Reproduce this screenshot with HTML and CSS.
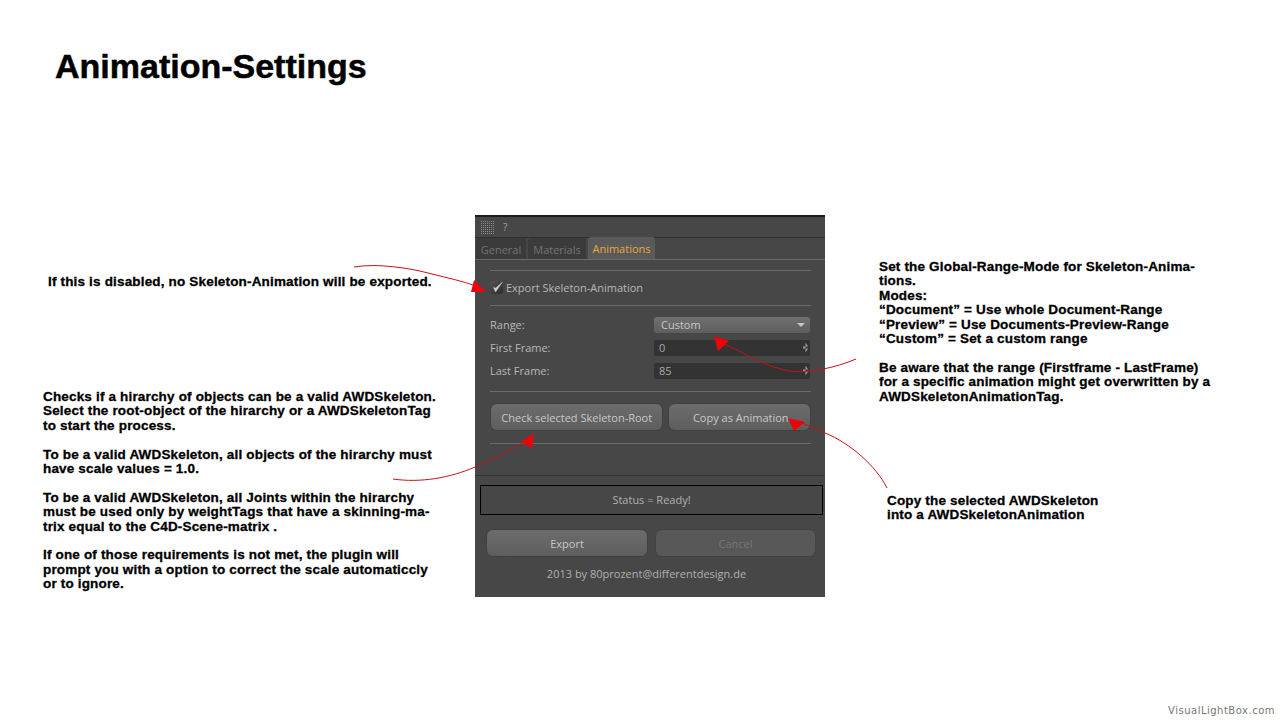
FILE: index.html
```html
<!DOCTYPE html>
<html lang="de">
<head>
    <meta charset="UTF-8" />
    <title>Animation-Settings</title>
    <link rel="stylesheet" href="styles.css">
</head>
<body>
<div class="slide">

    <h1 class="title">Animation-Settings</h1>

    <!-- Notes around the panel -->
    <div class="note note-export">
        <p>If this is disabled, no Skeleton-Animation will be exported.</p>
    </div>

    <div class="note note-check">
        <p>Checks if a hirarchy of objects can be a valid AWDSkeleton.<br>Select the root-object of the hirarchy or a AWDSkeletonTag<br>to start the process.</p>
        <p>To be a valid AWDSkeleton, all objects of the hirarchy must<br>have scale values = 1.0.</p>
        <p>To be a valid AWDSkeleton, all Joints within the hirarchy<br>must be used only by weightTags that have a skinning-ma-<br>trix equal to the C4D-Scene-matrix .</p>
        <p>If one of those requirements is not met, the plugin will<br>prompt you with a option to correct the scale automaticcly<br>or to ignore.</p>
    </div>

    <div class="note note-range">
        <p>Set the Global-Range-Mode for Skeleton-Anima-<br>tions.<br>Modes:<br>“Document” = Use whole Document-Range<br>“Preview” = Use Documents-Preview-Range<br>“Custom” = Set a custom range</p>
        <p>Be aware that the range (Firstframe - LastFrame)<br>for a specific animation might get overwritten by a<br>AWDSkeletonAnimationTag.</p>
    </div>

    <div class="note note-copy">
        <p>Copy the selected AWDSkeleton<br>into a AWDSkeletonAnimation</p>
    </div>

    <!-- Plugin dialog -->
    <div class="panel">
        <div class="panel-top">
            <svg class="grip" width="13" height="13" viewBox="0 0 13 13">
                <defs>
                    <pattern id="gripDots" width="2" height="2" patternUnits="userSpaceOnUse">
                        <rect width="1" height="1" fill="#8a8a8a"/>
                    </pattern>
                </defs>
                <rect width="13" height="13" fill="url(#gripDots)"/>
            </svg>
            <span class="help">?</span>
        </div>

        <div class="tabs">
            <span class="tab tab-general">General</span>
            <span class="tab tab-materials">Materials</span>
            <span class="tab tab-active">Animations</span>
        </div>

        <div class="panel-body">
            <div class="sep"></div>

            <div class="check-row">
                <span class="checkbox">
                    <svg width="13" height="13" viewBox="0 0 13 13">
                        <path d="M3.5 6.5 L5.5 11 L12.5 1 L5.8 7 Z" fill="#cfcfcf" stroke="#cfcfcf" stroke-width="0.4"/>
                    </svg>
                </span>
                <span>Export Skeleton-Animation</span>
            </div>

            <div class="sep"></div>

            <div class="form-row form-row-first">
                <label>Range:</label>
                <div class="select">
                    <span>Custom</span>
                    <span class="caret"></span>
                </div>
            </div>
            <div class="form-row">
                <label>First Frame:</label>
                <div class="field"><span>0</span><span class="spin"></span></div>
            </div>
            <div class="form-row">
                <label>Last Frame:</label>
                <div class="field"><span>85</span><span class="spin"></span></div>
            </div>

            <div class="sep sep-before-btns"></div>

            <div class="btn-row">
                <button class="btn btn-check">Check selected Skeleton-Root</button>
                <button class="btn btn-copy">Copy as Animation</button>
            </div>

            <div class="sep sep-after-btns"></div>
        </div>

        <div class="panel-foot">
            <div class="status">Status = Ready!</div>
            <div class="foot-btns">
                <button class="btn btn-export">Export</button>
                <button class="btn btn-cancel">Cancel</button>
            </div>
            <div class="credit">2013 by 80prozent@differentdesign.de</div>
        </div>
    </div>

    <!-- Red arrows, on top of everything -->
    <svg class="arrows" width="1280" height="720" viewBox="0 0 1280 720">
        <g fill="none" stroke="#c4121b" stroke-width="1">
            <path d="M354 267 C378 263 410 268 432 274 C448 278 462 281 476 286"/>
            <path d="M856 359 C835 368 810 373 790 371 C765 367 745 353 724 344"/>
            <path d="M393 479 C420 483 450 478 475 467 C495 458 510 450 526 441"/>
            <path d="M887 488 C876 466 850 443 825 433 C815 428 808 425 798 422"/>
        </g>
        <g fill="#f00008">
            <polygon points="486,292 474,280 471,292"/>
            <polygon points="714,336 729,341 718,351"/>
            <polygon points="534,433 521,442 532,448"/>
            <polygon points="788,418 805,422 794,431"/>
        </g>
    </svg>

    <div class="watermark">VisualLightBox.com</div>
</div>
</body>
</html>
```

FILE: styles.css
```css
* {
    box-sizing: border-box;
}

body {
    margin: 0;
    background: #fff;
    font-family: "Liberation Sans", Arial, sans-serif;
}

.slide {
    position: relative;
    width: 1280px;
    height: 720px;
    overflow: hidden;
    background: #fff;
}

.title {
    position: absolute;
    left: 55px;
    top: 47px;
    margin: 0;
    font-size: 34px;
    line-height: 38px;
    font-weight: 700;
    color: #000;
    -webkit-text-stroke: 0.5px #000;
}

/* Notes */
.note {
    position: absolute;
    color: #000;
    font-size: 13.5px;
    line-height: 14.4px;
    font-weight: 700;
    letter-spacing: 0.17px;
    -webkit-text-stroke: 0.3px #000;
    white-space: nowrap;
}

.note p {
    margin: 0 0 14.4px 0;
}

.note-export { left: 48px; top: 275px; }
.note-check { left: 43px; top: 390px; }
.note-range { left: 879px; top: 260px; }
.note-copy { left: 887px; top: 494px; }

/* Panel */
.panel {
    position: absolute;
    left: 475px;
    top: 215px;
    width: 350px;
    height: 382px;
    background: #474747;
    color: #b8b8b8;
    font-family: "Open Sans", sans-serif;
    font-size: 11px;
    border-top: 2px solid #1c1c1c;
}

.panel-top {
    display: flex;
    align-items: center;
    gap: 9px;
    height: 21px;
    padding-left: 6px;
    border-bottom: 1px solid #303030;
}

.help {
    color: #a0a0a0;
    font-size: 10px;
}

.tabs {
    display: flex;
    align-items: flex-end;
    height: 22px;
    padding-left: 1px;
    border-bottom: 1px solid #6a6a6a;
}

.tab {
    height: 21px;
    line-height: 23px;
    text-align: center;
    background: #3b3b3b;
    color: #757575;
    border-radius: 3px 3px 0 0;
}

.tab-general { width: 50px; }
.tab-materials { width: 58px; margin-left: 2px; }

.tab-active {
    width: 67px;
    height: 22px;
    line-height: 24px;
    margin-left: 2px;
    background: #5a5a5a;
    color: #e9a63f;
}

.panel-body {
    padding: 10px 14px 0 15px;
    height: 216px;
    border-bottom: 1px solid #343434;
}

.sep {
    height: 1px;
    background: #6b6b6b;
}

.check-row {
    display: flex;
    align-items: center;
    gap: 3px;
    height: 34px;
    padding-bottom: 2px;
    color: #b8b8b8;
}

.checkbox {
    display: block;
    width: 13px;
    height: 13px;
    border-radius: 3px;
    background: linear-gradient(135deg, #555, #2a2a2a);
}

.form-row {
    display: grid;
    grid-template-columns: 164px 156px;
    align-items: center;
    height: 23px;
}

.form-row-first {
    margin-top: 7px;
}

.select {
    display: flex;
    align-items: center;
    justify-content: space-between;
    height: 16px;
    padding: 0 5px 0 7px;
    border-radius: 3px;
    background: linear-gradient(#707070, #5e5e5e);
    color: #c8c8c8;
}

.caret {
    width: 0;
    height: 0;
    border-left: 4px solid transparent;
    border-right: 4px solid transparent;
    border-top: 4px solid #c8c8c8;
}

.field {
    display: flex;
    align-items: center;
    justify-content: space-between;
    height: 16px;
    padding: 0 2px 0 5px;
    background: #333;
    border-radius: 2px;
    color: #a8a8a8;
}

/* two little triangles of the number spinner */
.spin {
    width: 5px;
    height: 10px;
    background: #a0a0a0;
    clip-path: polygon(50% 0, 100% 40%, 0 40%, 0 60%, 100% 60%, 50% 100%);
}

.sep-before-btns {
    margin-top: 9px;
}

.btn-row {
    display: flex;
    gap: 5px;
    margin-top: 11px;
}

.btn {
    display: block;
    height: 28px;
    padding: 0;
    border: 1px solid #404040;
    border-radius: 7px;
    background: linear-gradient(#6c6c6c, #5e5e5e);
    color: #c8c8c8;
    font-family: "Open Sans", sans-serif;
    font-size: 11px;
}

.btn-check { width: 174px; }
.btn-copy { width: 143px; padding-left: 2px; }

.sep-after-btns {
    margin-top: 12px;
}

.panel-foot {
    padding: 9px 2px 0 5px;
}

.status {
    height: 30px;
    line-height: 28px;
    text-align: center;
    border: 1px solid #000;
    color: #b0b0b0;
}

.foot-btns {
    display: flex;
    gap: 7px;
    margin-top: 14px;
    padding-left: 6px;
}

.btn-export { width: 162px; }

.btn-cancel {
    width: 161px;
    border-color: #434343;
    background: #585858;
    color: #767676;
}

.credit {
    margin-top: 9px;
    padding-right: 10px;
    text-align: center;
    color: #b0b0b0;
}

.arrows {
    position: absolute;
    left: 0;
    top: 0;
}

.watermark {
    position: absolute;
    right: 5px;
    top: 705px;
    font-family: "DejaVu Sans", sans-serif;
    font-size: 10px;
    letter-spacing: 0.5px;
    color: #777;
}
```
